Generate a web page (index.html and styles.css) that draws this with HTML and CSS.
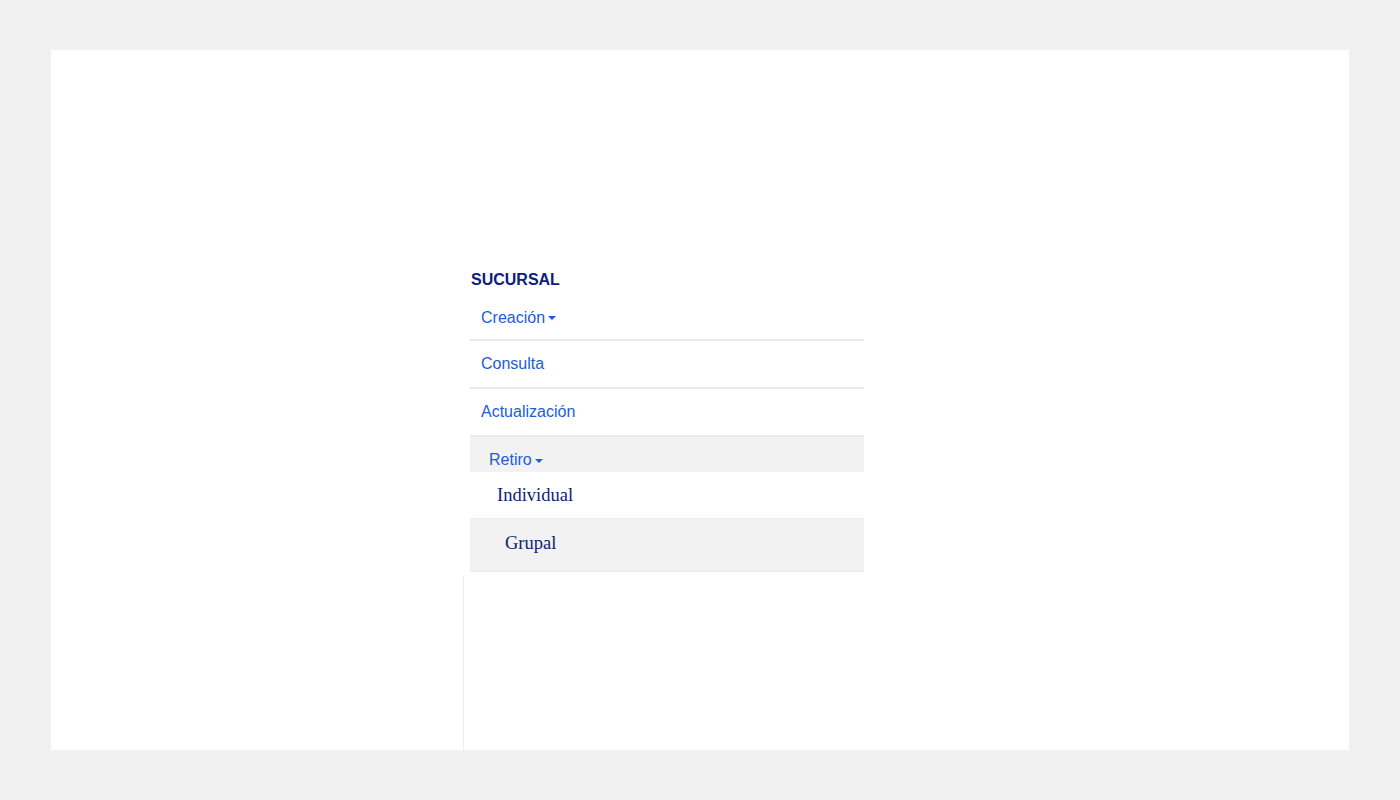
FILE: index.html
```html
<!DOCTYPE html>
<html lang="es">
<head>
<meta charset="utf-8">
<title>Sucursal</title>
<link rel="stylesheet" href="styles.css">
</head>
<body>
<div class="panel">
  <div class="column">
    <nav class="menu">
      <h2 class="menu-title">SUCURSAL</h2>
      <ul class="menu-list">
        <li class="item item-first"><a class="link">Creación<span class="caret"></span></a></li>
        <li class="item"><a class="link">Consulta</a></li>
        <li class="item"><a class="link">Actualización</a></li>
        <li class="item item-open">
          <a class="link link-open">Retiro<span class="caret"></span></a>
          <ul class="submenu">
            <li class="sub-item">Individual</li>
            <li class="sub-item sub-active">Grupal</li>
          </ul>
        </li>
      </ul>
    </nav>
    <div class="below"></div>
  </div>
</div>
</body>
</html>
```

FILE: styles.css
```css
html, body {
  margin: 0;
  padding: 0;
}
body {
  background: #f1f1f1;
  padding: 50px 51px;
  height: 800px;
  box-sizing: border-box;
  font-family: "Liberation Sans", Arial, sans-serif;
}
.panel {
  background: #ffffff;
  height: 700px;
  display: flex;
  padding-left: 412px;
  box-sizing: border-box;
}
.column {
  width: 401px;
  display: flex;
  flex-direction: column;
  padding-top: 220px;
  box-sizing: border-box;
}
.menu {
  margin-left: 7px;
  width: 394px;
}
.menu-title {
  margin: 0;
  font-size: 16px;
  font-weight: bold;
  line-height: 20px;
  color: #0b2080;
  padding-left: 1px;
  height: 26px;
}
.menu-list {
  list-style: none;
  margin: 0;
  padding: 0;
}
.item {
  border-bottom: 2px solid #ebebeb;
}
.link {
  display: flex;
  align-items: center;
  height: 46px;
  padding-left: 11px;
  font-size: 16px;
  color: #1a5cdc;
  cursor: pointer;
  box-sizing: border-box;
}
.item-first .link {
  height: 43px;
}
.caret {
  display: inline-block;
  width: 0;
  height: 0;
  margin-left: 3px;
  margin-top: 1px;
  border-left: 4.5px solid transparent;
  border-right: 4.5px solid transparent;
  border-top: 4.5px solid #1a5cdc;
}
.item-open {
  border-bottom: 1px solid #ebebeb;
}
.link-open {
  background: #f2f2f2;
  height: 35px;
  padding-left: 19px;
  padding-top: 11px;
}
.submenu {
  list-style: none;
  margin: 0;
  padding: 0;
}
.sub-item {
  font-family: "Liberation Serif", "Times New Roman", serif;
  font-size: 18.5px;
  color: #0d1f6e;
  height: 46px;
  display: flex;
  align-items: center;
  padding-left: 27px;
  border-bottom: 1px solid #ebebeb;
}
.sub-active {
  background: #f2f2f2;
  height: 52px;
  padding-left: 35px;
  padding-bottom: 4px;
  box-sizing: border-box;
  border-bottom: none;
}
.below {
  flex: 1;
  margin-top: 4px;
  border-left: 1px solid #efefef;
}
```
